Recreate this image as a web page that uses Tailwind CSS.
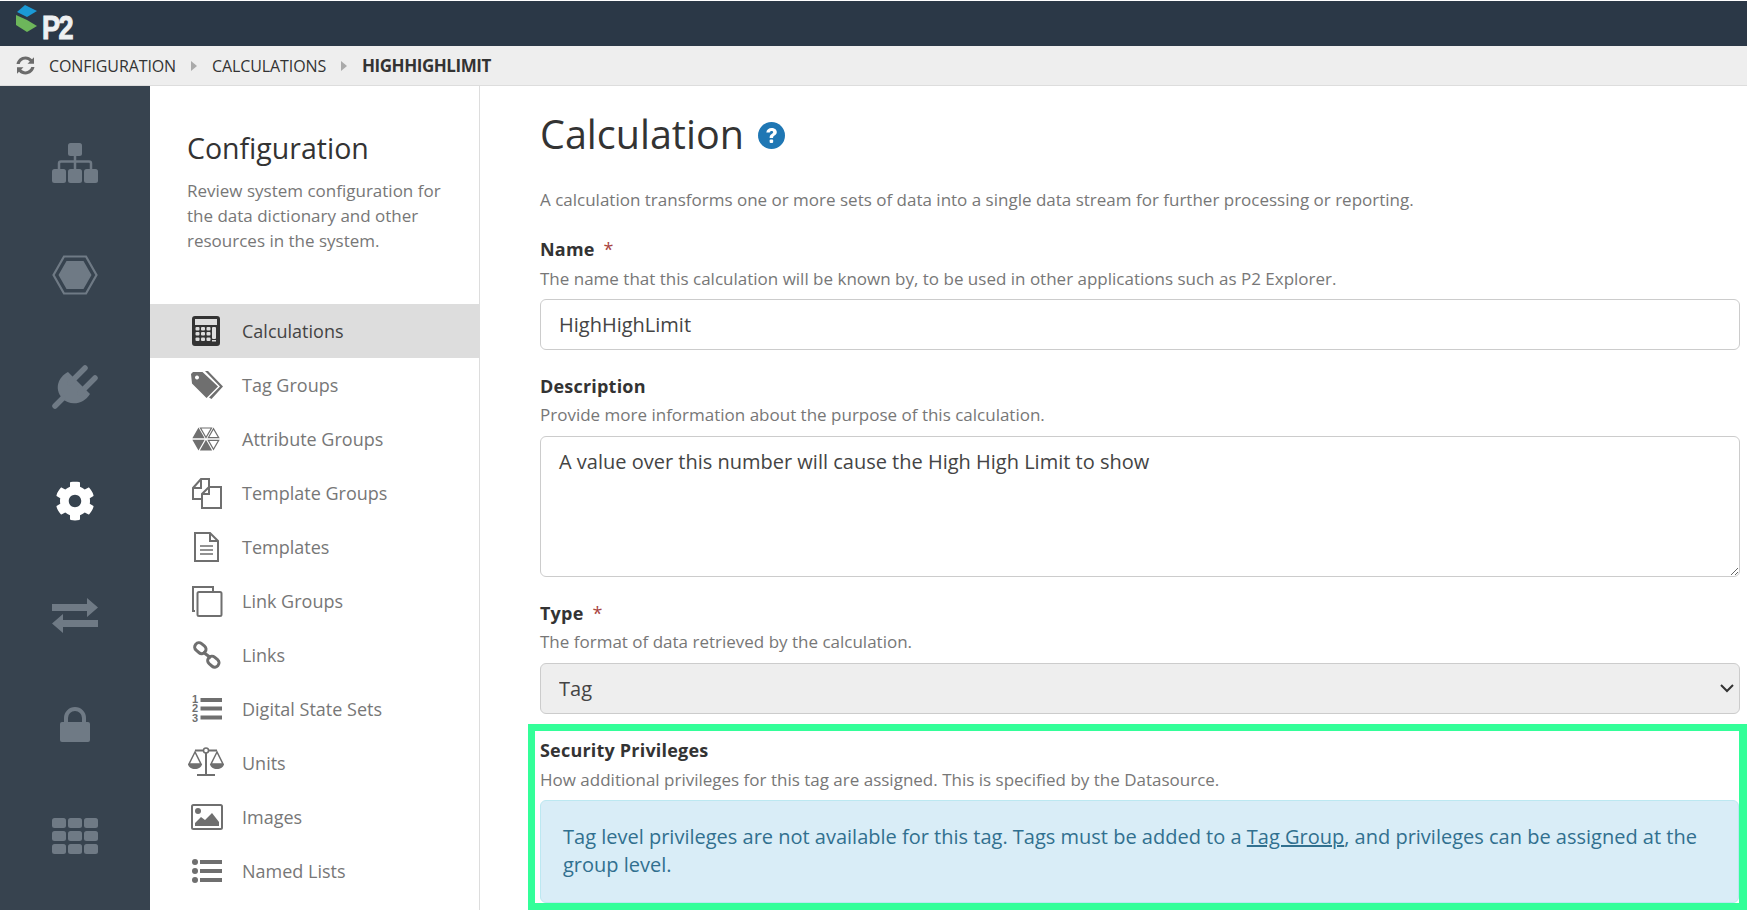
<!DOCTYPE html>
<html lang="en">
<head>
<meta charset="UTF-8">
<title>Calculation</title>
<script src="https://cdn.jsdelivr.net/npm/@tailwindcss/browser@4"></script>
</head>
<body class="h-[910px] w-[1747px] overflow-hidden bg-white font-['Open_Sans',sans-serif] text-[17px] text-[#333]">
  <!-- top bar -->
  <header class="mt-px flex h-[45px] items-start bg-[#2b3847] pl-[16px]">
    <svg width="22" height="29" viewBox="0 0 22 29" class="mt-[3px] shrink-0">
      <path d="M9 1 L21 7 L11 13 L1 8Z" fill="#1b9ad6"/>
      <path d="M0 11 L11 16 L21 22 L11 28 L0 21Z" fill="#6db65b"/>
    </svg>
    <span class="mt-[8px] ml-[4px] origin-left scale-x-[0.82] font-['Liberation_Sans',sans-serif] text-[33px] leading-[38px] font-bold tracking-[-2px] text-[#eef0f2] [-webkit-text-stroke:1px_#eef0f2]">P2</span>
  </header>

  <!-- breadcrumb -->
  <nav class="flex h-[40px] items-center border-b border-[#ddd] bg-[#eee] pl-[15px] text-[16px] tracking-[-0.1px] text-[#333]">
    <svg width="21" height="21" viewBox="0 0 21 21" fill="#6b6b6b" class="mr-[13px]">
      <path d="M10.500 1.500c2.600 0 4.900 1.100 6.500 2.800L19 2.300v6.500h-6.500l2.300-2.300c-1.100-1.100-2.600-1.900-4.300-1.900-2.700 0-5 1.800-5.800 4.300H1.500C2.400 4.600 6 1.500 10.500 1.500z"/>
      <path d="M10.500 19.500c-2.600 0-4.900-1.100-6.500-2.800L2 18.700v-6.500h6.500l-2.300 2.300c1.100 1.100 2.600 1.900 4.300 1.900 2.700 0 5-1.800 5.800-4.300h3.200c-.9 4.300-4.500 7.400-9 7.400z"/>
    </svg>
    <span class="w-[127px] whitespace-nowrap">CONFIGURATION</span>
    <span class="mx-[15px] h-0 w-0 border-y-[5px] border-l-[6px] border-y-transparent border-l-[#aaa]"></span>
    <span class="w-[114px] whitespace-nowrap">CALCULATIONS</span>
    <span class="mx-[15px] h-0 w-0 border-y-[5px] border-l-[6px] border-y-transparent border-l-[#aaa]"></span>
    <span class="text-[17px] font-bold tracking-[-0.45px] whitespace-nowrap">HIGHHIGHLIMIT</span>
  </nav>

  <div class="flex h-[825px]">
    <!-- icon rail -->
    <aside class="flex w-[150px] shrink-0 flex-col items-center bg-[#37434f] pt-[57px]">
      <div class="flex h-[112.5px] w-full shrink-0 items-start justify-center">
        <svg width="46" height="40" viewBox="0 0 46 40" fill="#6f7a85">
          <rect x="16" y="0" width="14" height="13" rx="2.500"/>
          <rect x="0" y="26" width="14" height="14" rx="2.500"/><rect x="16" y="26" width="14" height="14" rx="2.500"/><rect x="32" y="26" width="14" height="14" rx="2.500"/>
          <path d="M7 27v-6.500q0-2 2-2h28q2 0 2 2V27M23 13v14" fill="none" stroke="#6f7a85" stroke-width="2.500"/>
        </svg>
      </div>
      <div class="flex h-[112.5px] w-full shrink-0 items-start justify-center">
        <svg width="46" height="40" viewBox="0 0 46 40" fill="#6f7a85" class="-mt-[1px]">
          <path d="M12 1.500H34L44.500 20 34 38.500H12L1.500 20Z" fill="none" stroke="#6f7a85" stroke-width="2.200"/>
          <path d="M14.500 6H31.500L39.500 20 31.500 34H14.500L6.500 20Z"/>
        </svg>
      </div>
      <div class="flex h-[112.5px] w-full shrink-0 items-start justify-center">
        <svg width="46" height="46" viewBox="0 0 46 46" fill="#6f7a85" stroke-linecap="round" class="-mt-[3px]">
          <path d="M16 7 L38 29 C32 39 18 42 10 33 C2 24 6 12 16 7Z"/>
          <path d="M33 3 L18 18M43 13 L28 28M11 33 L3 41" stroke="#6f7a85" stroke-width="5.500" fill="none"/>
        </svg>
      </div>
      <div class="flex h-[112.5px] w-full shrink-0 items-start justify-center">
        <svg width="40" height="40" viewBox="0 0 512 512" fill="#fff">
          <path d="M487.400 315.700l-42.600-24.600c4.300-23.200 4.300-47 0-70.200l42.600-24.600c4.900-2.800 7.100-8.600 5.500-14-11.100-35.600-30-67.800-54.700-94.600-3.800-4.100-10-5.100-14.800-2.300L380.800 110c-17.900-15.400-38.500-27.300-60.800-35.100V25.800c0-5.600-3.900-10.500-9.400-11.700-36.700-8.200-74.300-7.800-109.200 0-5.500 1.200-9.400 6.100-9.400 11.700V75c-22.200 7.900-42.800 19.800-60.800 35.100L88.700 85.500c-4.900-2.800-11-1.900-14.800 2.300-24.700 26.700-43.600 58.900-54.700 94.600-1.700 5.400.6 11.200 5.500 14L67.300 221c-4.300 23.200-4.300 47 0 70.200l-42.600 24.600c-4.900 2.800-7.100 8.600-5.500 14 11.100 35.600 30 67.800 54.700 94.600 3.800 4.100 10 5.100 14.800 2.300l42.600-24.600c17.900 15.400 38.500 27.300 60.800 35.100v49.200c0 5.600 3.900 10.500 9.400 11.700 36.700 8.200 74.300 7.800 109.200 0 5.500-1.200 9.400-6.100 9.400-11.700v-49.200c22.200-7.900 42.800-19.800 60.800-35.100l42.600 24.600c4.900 2.800 11 1.900 14.800-2.300 24.700-26.700 43.600-58.900 54.700-94.600 1.500-5.500-.7-11.300-5.600-14.100zM256 336c-44.100 0-80-35.900-80-80s35.900-80 80-80 80 35.900 80 80-35.900 80-80 80z"/>
        </svg>
      </div>
      <div class="flex h-[112.5px] w-full shrink-0 items-start justify-center">
        <svg width="46" height="35" viewBox="0 0 46 35" fill="#6f7a85" class="mt-[5px]">
          <path d="M0 6h35V0l11 9.500L35 19v-6H0z"/>
          <path d="M46 22H11v-6L0 25.500 11 35v-6h35z"/>
        </svg>
      </div>
      <div class="flex h-[112.5px] w-full shrink-0 items-start justify-center">
        <svg width="30" height="36" viewBox="0 0 30 36" fill="#6f7a85">
          <path d="M6 17V12a9 9 0 0 1 18 0v5" fill="none" stroke="#6f7a85" stroke-width="4"/>
          <rect x="0" y="16" width="30" height="20" rx="2"/>
        </svg>
      </div>
      <div class="flex h-[112.5px] w-full shrink-0 items-start justify-center">
        <svg width="46" height="36" viewBox="0 0 46 36" fill="#6f7a85">
          <rect x="0" y="0" width="14" height="10" rx="2.500"/><rect x="16" y="0" width="14" height="10" rx="2.500"/><rect x="32" y="0" width="14" height="10" rx="2.500"/>
          <rect x="0" y="13" width="14" height="10" rx="2.500"/><rect x="16" y="13" width="14" height="10" rx="2.500"/><rect x="32" y="13" width="14" height="10" rx="2.500"/>
          <rect x="0" y="26" width="14" height="10" rx="2.500"/><rect x="16" y="26" width="14" height="10" rx="2.500"/><rect x="32" y="26" width="14" height="10" rx="2.500"/>
        </svg>
      </div>
    </aside>

    <!-- configuration menu -->
    <div class="w-[330px] shrink-0 border-r border-[#ddd]">
      <div class="h-[218px] pt-[44px] pr-[20px] pl-[37px]">
        <h2 class="text-[28.500px] leading-[36px] text-[#333]">Configuration</h2>
        <p class="mt-[12px] leading-[25px] text-[#777]">Review system configuration for<br>the data dictionary and other<br>resources in the system.</p>
      </div>
      <ul class="text-[18px] text-[#777]">
        <li class="flex h-[54px] items-center bg-[#ddd] pl-[38px] text-[#444]">
          <svg width="36" height="32" viewBox="0 0 36 32" class="mr-[18px]" fill="#333">
            <rect x="5.500" y="2.500" width="25" height="27" rx="1.500" fill="none" stroke="#333" stroke-width="3"/>
            <path d="M5 10h26v20H5z"/>
            <g fill="#ddd">
              <rect x="7.500" y="12" width="4" height="3.500" rx="1"/><rect x="13" y="12" width="4" height="3.500" rx="1"/><rect x="18.500" y="12" width="4" height="3.500" rx="1"/><rect x="24" y="12" width="4" height="12" rx="1"/>
              <rect x="7.500" y="17" width="4" height="3.500" rx="1"/><rect x="13" y="17" width="4" height="3.500" rx="1"/><rect x="18.500" y="17" width="4" height="3.500" rx="1"/>
              <rect x="7.500" y="22.500" width="4" height="3.500" rx="1"/><rect x="13" y="22.500" width="4" height="3.500" rx="1"/><rect x="18.500" y="22.500" width="4" height="3.500" rx="1"/><rect x="24" y="25" width="4" height="1.500"/>
            </g>
          </svg>
          Calculations
        </li>
        <li class="flex h-[54px] items-center pl-[38px]">
          <svg width="36" height="32" viewBox="0 0 36 32" class="mr-[18px]" fill="#6f6f6f">
            <path fill-rule="evenodd" d="M5 3h9.500L30 17.500 18.500 29 4 14.500 3 5zM9 6.500a2 2 0 1 0 .01 0z"/>
            <path d="M17 2h3l15 15.500L23.500 30l-2.500-1.500L32 17.500z"/>
          </svg>
          Tag Groups
        </li>
        <li class="flex h-[54px] items-center pl-[38px]">
          <svg width="36" height="32" viewBox="0 0 36 32" class="mr-[18px]" fill="#6f6f6f">
            <path d="M4.350 15.220 10.500 4.560 16.650 15.220ZM4.350 16.780H16.650L10.500 27.440ZM18 16.780 24.150 27.440H11.850Z"/>
            <path d="M12.500 5H23.500L18 14.500ZM20.300 14.700 25.500 5.800 30.700 14.700ZM20.300 17.300H30.700L25.500 26.200Z" fill="none" stroke="#6f6f6f" stroke-width="1.200"/>
          </svg>
          Attribute Groups
        </li>
        <li class="flex h-[54px] items-center pl-[38px]">
          <svg width="36" height="32" viewBox="0 0 36 32" class="mr-[18px]" fill="none" stroke="#6f6f6f" stroke-width="2">
            <path d="M14 22H5V11l8-9h8v8"/><path d="M13 2v9H5"/>
            <path d="M14 31V17l7-7h12v21z" fill="#fff"/><path d="M21 10v7h-7"/>
          </svg>
          Template Groups
        </li>
        <li class="flex h-[54px] items-center pl-[38px]">
          <svg width="36" height="32" viewBox="0 0 36 32" class="mr-[18px]" fill="none" stroke="#6f6f6f" stroke-width="2">
            <path d="M7 2h15l8 8v20H7z"/><path d="M22 2v8h8"/>
            <path d="M12 15h13M12 19h13M12 23h13" stroke-width="1.600"/>
          </svg>
          Templates
        </li>
        <li class="flex h-[54px] items-center pl-[38px]">
          <svg width="36" height="32" viewBox="0 0 36 32" class="mr-[18px]" fill="none" stroke="#6f6f6f" stroke-width="2">
            <path d="M7 26H5V2h20v4"/>
            <rect x="9.500" y="7" width="24" height="24" rx="1.500" fill="#fff"/>
          </svg>
          Link Groups
        </li>
        <li class="flex h-[54px] items-center pl-[38px]">
          <svg width="36" height="32" viewBox="0 0 36 32" class="mr-[18px]" fill="none" stroke="#6f6f6f" stroke-width="3">
            <rect x="6.500" y="5" width="12" height="8.500" rx="4" transform="rotate(40 12.500 9)"/>
            <rect x="19.500" y="18.500" width="12" height="8.500" rx="4" transform="rotate(40 25.500 22.500)"/>
            <path d="M15 13l8 6"/>
          </svg>
          Links
        </li>
        <li class="flex h-[54px] items-center pl-[38px]">
          <svg width="36" height="32" viewBox="0 0 36 32" class="mr-[18px]" fill="#6f6f6f">
            <rect x="12.500" y="5" width="21.500" height="4"/><rect x="12.500" y="13.500" width="21.500" height="4"/><rect x="12.500" y="22.500" width="21.500" height="4"/>
            <text x="4" y="9.500" font-size="11" font-weight="700" font-family="Liberation Sans, sans-serif">1</text>
            <text x="4" y="19" font-size="11" font-weight="700" font-family="Liberation Sans, sans-serif">2</text>
            <text x="4" y="28.500" font-size="11" font-weight="700" font-family="Liberation Sans, sans-serif">3</text>
          </svg>
          Digital State Sets
        </li>
        <li class="flex h-[54px] items-center pl-[38px]">
          <svg width="36" height="32" viewBox="0 0 36 32" class="mr-[18px]" fill="#6f6f6f">
            <path d="M18 5v24M9 28h18M7 3.500h22" fill="none" stroke="#6f6f6f" stroke-width="2"/>
            <circle cx="18" cy="3.500" r="2.500" fill="#fff" stroke="#6f6f6f" stroke-width="1.500"/>
            <path d="M7 5L1 17h12zM29 5l-6 12h12z" fill="none" stroke="#6f6f6f" stroke-width="1.500"/>
            <path d="M0 17h14c-.5 3.500-3.500 5-7 5s-6.500-1.500-7-5zM22 17h14c-.5 3.500-3.500 5-7 5s-6.500-1.500-7-5z"/>
          </svg>
          Units
        </li>
        <li class="flex h-[54px] items-center pl-[38px]">
          <svg width="36" height="32" viewBox="0 0 36 32" class="mr-[18px]" fill="#6f6f6f">
            <rect x="4" y="4" width="30" height="24" rx="1.500" fill="none" stroke="#6f6f6f" stroke-width="2"/>
            <circle cx="10" cy="10" r="3"/>
            <path d="M7 25v-3l6-6 4 3 7-7 7 9v4z"/>
          </svg>
          Images
        </li>
        <li class="flex h-[54px] items-center pl-[38px]">
          <svg width="36" height="32" viewBox="0 0 36 32" class="mr-[18px]" fill="#6f6f6f">
            <circle cx="7" cy="7" r="3"/><circle cx="7" cy="16" r="3"/><circle cx="7" cy="25" r="3"/>
            <rect x="12" y="5" width="22" height="4"/><rect x="12" y="14" width="22" height="4"/><rect x="12" y="23" width="22" height="4"/>
          </svg>
          Named Lists
        </li>
      </ul>
    </div>

    <!-- form -->
    <main class="min-w-0 flex-1 pr-[7px] pl-[60px]">
      <div class="flex h-[99px] items-center pb-[3px]">
        <h1 class="text-[39.500px] leading-[50px] text-[#333]">Calculation</h1>
        <svg width="27" height="27" viewBox="0 0 26 26" class="mt-[2px] ml-[14px]">
          <circle cx="13" cy="13" r="13" fill="#1f77b4"/>
          <path d="M8 10c.3-2.800 2.400-4.300 5.100-4.300 2.800 0 5 1.500 5 4 0 3.300-3.600 3.200-3.600 5.600h-3.300c0-3.800 3.400-3.700 3.400-5.400 0-.8-.7-1.300-1.500-1.300-1 0-1.600.6-1.800 1.600z" fill="#fff"/>
          <rect x="11.200" y="16.800" width="3.400" height="3.400" rx="1" fill="#fff"/>
        </svg>
      </div>
      <p class="leading-[30px] text-[#777]">A calculation transforms one or more sets of data into a single data stream for further processing or reporting.</p>

      <label class="mt-[19px] block text-[18px] leading-[30px] font-bold tracking-[0.2px]">Name <span class="ml-[4px] font-normal text-[#a94442]">*</span></label>
      <p class="leading-[30px] text-[#777]">The name that this calculation will be known by, to be used in other applications such as P2 Explorer.</p>
      <input value="HighHighLimit" class="mt-[5px] block h-[51px] w-full rounded-[6px] border border-[#ccc] bg-white px-[18px] text-[20px] text-[#444]">

      <label class="mt-[21px] block text-[18px] leading-[30px] font-bold tracking-[0.2px]">Description</label>
      <p class="-mt-[1px] leading-[30px] text-[#777]">Provide more information about the purpose of this calculation.</p>
      <textarea class="mt-[6px] block h-[141px] w-full rounded-[6px] border border-[#ccc] bg-white px-[18px] py-[11px] text-[20px] leading-[27px] text-[#444]">A value over this number will cause the High High Limit to show</textarea>

      <label class="mt-[21px] block text-[18px] leading-[30px] font-bold tracking-[0.2px]">Type <span class="ml-[4px] font-normal text-[#a94442]">*</span></label>
      <p class="-mt-[1px] leading-[30px] text-[#777]">The format of data retrieved by the calculation.</p>
      <div class="relative mt-[6px]">
        <select class="block h-[51px] w-full appearance-none rounded-[6px] border border-[#ccc] bg-[#eee] px-[18px] text-[20px] text-[#444]">
          <option>Tag</option>
        </select>
        <svg width="14" height="9" viewBox="0 0 14 9" fill="none" stroke="#333" stroke-width="2" class="pointer-events-none absolute top-[21px] right-[6px]">
          <path d="M1 1l6 6 6-6"/>
        </svg>
      </div>

      <!-- highlighted region -->
      <section class="mt-[10px] -mr-[7px] -ml-[12px] h-[186px] border-[7px] border-r-[8px] border-[#33ff99] pl-[5px]">
        <h3 class="pt-[4px] text-[18px] leading-[30px] font-bold tracking-[0.2px]">Security Privileges</h3>
        <p class="leading-[30px] text-[#777]">How additional privileges for this tag are assigned. This is specified by the Datasource.</p>
        <div class="mt-[5px] h-[103px] rounded-[6px] border border-[#bce8f1] bg-[#d9edf7] px-[22px] pt-[22px] text-[20px] leading-[28px] text-[#31708f]">
          Tag level privileges are not available for this tag. Tags must be added to a <a href="#" class="underline">Tag Group</a>, and privileges can be assigned at the group level.
        </div>
      </section>
    </main>
  </div>
</body>
</html>
